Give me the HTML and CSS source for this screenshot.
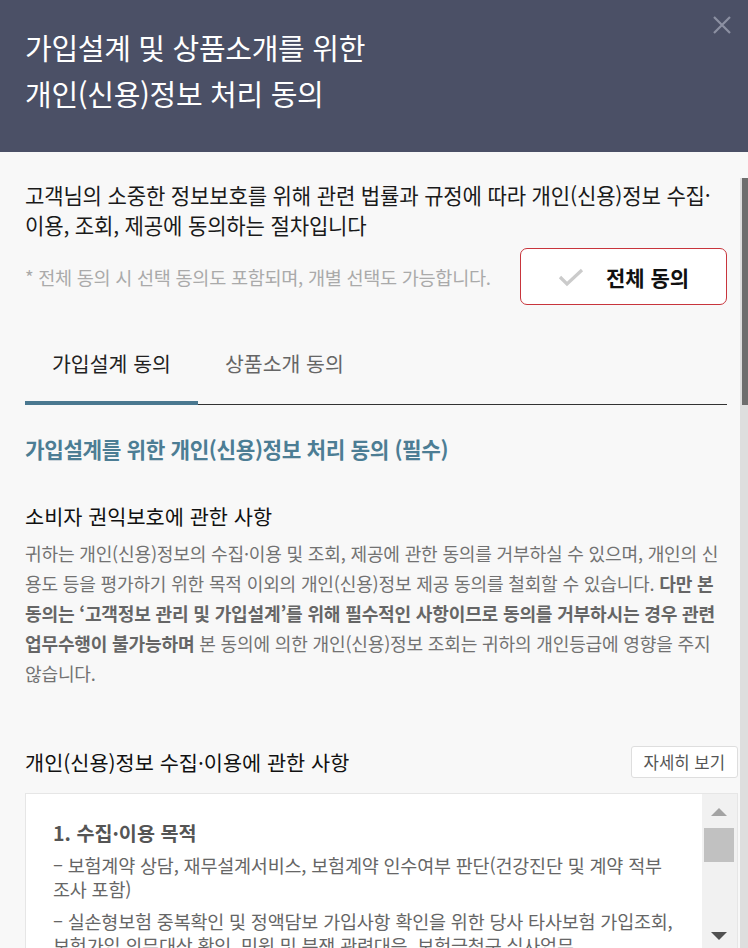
FILE: index.html
```html
<!DOCTYPE html>
<html lang="ko">
<head>
    <meta charset="UTF-8">
    <meta name="viewport" content="width=device-width, initial-scale=1.0">
    <title>개인(신용)정보 처리 동의</title>
    <link rel="stylesheet" href="styles.css">
</head>
<body>

<div class="modal">
    <header class="modal-head">
        <h1>가입설계 및 상품소개를 위한<br>개인(신용)정보 처리 동의</h1>
        <button class="close-btn" aria-label="닫기">
            <svg width="20" height="20" viewBox="0 0 20 20">
                <path d="M2 2 L18 18 M18 2 L2 18" stroke="#8c90a2" stroke-width="2.2" fill="none"/>
            </svg>
        </button>
    </header>

    <section class="modal-body">
        <p class="intro">고객님의 소중한 정보보호를 위해 관련 법률과 규정에 따라 개인(신용)정보 수집·<br>이용, 조회, 제공에 동의하는 절차입니다</p>

        <div class="agree-row">
            <p class="note">* 전체 동의 시 선택 동의도 포함되며, 개별 선택도 가능합니다.</p>
            <button class="agree-all">
                <svg width="26" height="20" viewBox="0 0 26 20">
                    <path d="M2 10 L9 17 L24 3" stroke="#cbcbcb" stroke-width="3.2" fill="none"/>
                </svg>
                <span>전체 동의</span>
            </button>
        </div>

        <div class="tabs">
            <div class="tab active">가입설계 동의</div>
            <div class="tab">상품소개 동의</div>
        </div>

        <h2 class="section-title">가입설계를 위한 개인(신용)정보 처리 동의 (필수)</h2>

        <h3 class="sub-title">소비자 권익보호에 관한 사항</h3>
        <p class="desc">귀하는 개인(신용)정보의 수집·이용 및 조회, 제공에 관한 동의를 거부하실 수 있으며, 개인의 신<br>용도 등을 평가하기 위한 목적 이외의 개인(신용)정보 제공 동의를 철회할 수 있습니다. <b>다만 본<br>동의는 ‘고객정보 관리 및 가입설계’를 위해 필수적인 사항이므로 동의를 거부하시는 경우 관련<br>업무수행이 불가능하며</b> 본 동의에 의한 개인(신용)정보 조회는 귀하의 개인등급에 영향을 주지<br>않습니다.</p>

        <div class="detail-row">
            <h3 class="sub-title">개인(신용)정보 수집·이용에 관한 사항</h3>
            <button class="detail-btn">자세히 보기</button>
        </div>

        <div class="terms-box">
            <div class="terms-text">
                <p class="terms-head">1. 수집·이용 목적</p>
                <p class="terms-item">– 보험계약 상담, 재무설계서비스, 보험계약 인수여부 판단(건강진단 및 계약 적부<br>조사 포함)</p>
                <p class="terms-item">– 실손형보험 중복확인 및 정액담보 가입사항 확인을 위한 당사 타사보험 가입조회,<br>보험가입 의무대상 확인, 민원 및 분쟁 관련대응, 보험금청구 심사업무</p>
            </div>
            <div class="box-scroll">
                <span class="arrow-up"></span>
                <span class="box-thumb"></span>
                <span class="arrow-down"></span>
            </div>
        </div>

        <div class="page-scroll">
            <span class="page-thumb"></span>
        </div>
    </section>
</div>

</body>
</html>
```

FILE: styles.css
```css
html, body {
    margin: 0;
    padding: 0;
    height: 948px;
    overflow: hidden;
}

body {
    font-family: "Noto Sans CJK KR", "Noto Sans", sans-serif;
    background-color: #f8f8f8;
    color: #222;
}

p, h1, h2, h3 {
    margin: 0;
}

.modal-head {
    position: relative;
    background-color: #4b5066;
    height: 152px;
    box-sizing: border-box;
    padding: 24px 25px 0;
}

.modal-head h1 {
    font-size: 29px;
    font-weight: 400;
    line-height: 46px;
    color: #fff;
    letter-spacing: -0.3px;
}

.close-btn {
    position: absolute;
    top: 15px;
    right: 16px;
    padding: 0;
    border: none;
    background: none;
    width: 20px;
    height: 20px;
}

.close-btn svg {
    display: block;
}

.modal-body {
    position: relative;
    height: 796px;
    overflow: hidden;
    padding: 28px 10px 0 25px;
}

.intro {
    font-size: 21.1px;
    line-height: 30px;
    color: #1a1a1a;
    margin-right: 11px;
    letter-spacing: -0.2px;
}

.agree-row {
    display: flex;
    align-items: center;
    justify-content: space-between;
    margin: 8px 11px 0 0;
}

.note {
    font-size: 18.6px;
    color: #aaa;
    letter-spacing: -0.3px;
}

.agree-all {
    display: flex;
    align-items: center;
    gap: 22px;
    width: 207px;
    height: 57px;
    padding: 0 0 0 37px;
    box-sizing: border-box;
    background-color: #fff;
    border: 1px solid #c8353c;
    border-radius: 7px;
    font-family: inherit;
    font-size: 21px;
    font-weight: 700;
    color: #111;
}

.tabs {
    display: flex;
    margin: 20px 11px 0 0;
    border-bottom: 1px solid #333;
}

.tab {
    padding: 24px 27px;
    margin-bottom: -1px;
    border-bottom: 4px solid transparent;
    font-size: 20.5px;
    line-height: 28px;
    color: #666;
}

.tab.active {
    color: #222;
    border-bottom-color: #4a7890;
}

.section-title {
    margin-top: 30px;
    font-size: 21.3px;
    font-weight: 700;
    line-height: 28px;
    color: #4c7d94;
    letter-spacing: -0.4px;
}

.sub-title {
    margin-top: 39px;
    font-size: 20.8px;
    font-weight: 400;
    line-height: 28px;
    color: #111;
}

.desc {
    margin: 8px 11px 0 0;
    font-size: 18.1px;
    line-height: 30px;
    color: #727272;
    letter-spacing: -0.2px;
}

.desc b {
    font-weight: 600;
    color: #666;
}

.detail-row {
    display: flex;
    align-items: center;
    justify-content: space-between;
    margin-top: 58px;
    height: 32px;
}

.detail-row .sub-title {
    margin-top: 0;
}

.detail-btn {
    height: 32px;
    padding: 0 12px;
    background-color: #fff;
    border: 1px solid #dedede;
    border-radius: 3px;
    font-family: inherit;
    font-size: 16.7px;
    color: #555;
}

.terms-box {
    position: relative;
    margin-top: 15px;
    height: 300px;
    background-color: #fff;
    border: 1px solid #e6e6e6;
}

.terms-text {
    padding: 27px 40px 0 27px;
}

.terms-head {
    font-size: 19.6px;
    font-weight: 700;
    line-height: 24px;
    color: #555;
}

.terms-item {
    margin-top: 8px;
    font-size: 18.5px;
    line-height: 24px;
    color: #666;
    letter-spacing: -0.2px;
}

.box-scroll {
    position: absolute;
    top: 0;
    right: 0;
    width: 35px;
    height: 100%;
    background-color: #f1f1f1;
}

.arrow-up, .arrow-down, .box-thumb {
    position: absolute;
    display: block;
}

.arrow-up {
    top: 14px;
    left: 9px;
    border-left: 8px solid transparent;
    border-right: 8px solid transparent;
    border-bottom: 8px solid #a3a3a3;
}

.box-thumb {
    top: 34px;
    left: 2px;
    width: 30px;
    height: 34px;
    background-color: #c1c1c1;
}

.arrow-down {
    top: 138px;
    left: 9px;
    border-left: 8px solid transparent;
    border-right: 8px solid transparent;
    border-top: 8px solid #505050;
}

.page-scroll {
    position: absolute;
    top: 26px;
    right: 0;
    width: 8px;
    height: 770px;
    background-color: #dedede;
}

.page-thumb {
    display: block;
    margin-left: 2px;
    width: 6px;
    height: 227px;
    background-color: #6e6e6e;
}
```
